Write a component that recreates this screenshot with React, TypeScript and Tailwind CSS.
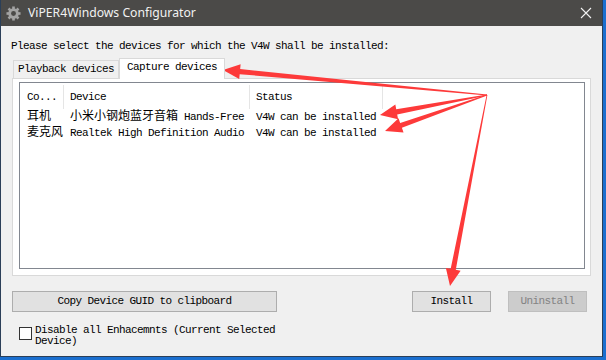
import React from "react"

const MONO = { fontFamily: "'Liberation Mono', 'Noto Sans CJK SC', monospace" }

const APEX: [number, number] = [487, 95]
const TIPS: [number, number][] = [
  [223, 70],
  [380, 115],
  [385, 131],
  [450, 286],
]

function arrowPoints(a: [number, number], t: [number, number]) {
  const dx = t[0] - a[0]
  const dy = t[1] - a[1]
  const len = Math.hypot(dx, dy)
  const ux = dx / len
  const uy = dy / len
  const nx = -uy
  const ny = ux
  const head = 17
  const bx = t[0] - ux * head
  const by = t[1] - uy * head
  const pts: [number, number][] = [
    [a[0] + nx * 0.4, a[1] + ny * 0.4],
    [bx + nx * 2.6, by + ny * 2.6],
    [bx + nx * 7.5, by + ny * 7.5],
    [t[0], t[1]],
    [bx - nx * 7.5, by - ny * 7.5],
    [bx - nx * 2.6, by - ny * 2.6],
    [a[0] - nx * 0.4, a[1] - ny * 0.4],
  ]
  return pts.map((p) => p.join(",")).join(" ")
}

function Gear() {
  const teeth = Array.from({ length: 8 }, (_, i) => i * 45)
  return (
    <svg width="15" height="15" viewBox="0 0 16 16">
      <g fill="#a3a3a3">
        {teeth.map((deg) => (
          <rect key={deg} x="6.6" y="0.5" width="2.8" height="4" transform={`rotate(${deg} 8 8)`} />
        ))}
        <circle cx="8" cy="8" r="5.6" />
      </g>
      <circle cx="8" cy="8" r="2.6" fill="#4b4a48" />
    </svg>
  )
}

const ROWS = [
  { name: "耳机", device: "小米小钢炮蓝牙音箱", deviceEn: " Hands-Free", status: "V4W can be installed" },
  { name: "麦克风", device: "", deviceEn: "Realtek High Definition Audio", status: "V4W can be installed" },
]

function Cjk({ children }: { children: React.ReactNode }) {
  return <span className="text-[12px] tracking-[0px]">{children}</span>
}

export default function App() {
  return (
    <div className="relative w-[606px] h-[360px] bg-[#1b6fcf] overflow-hidden">
      <div className="w-[603px] h-[357px] bg-[#f0f0f0] border-l border-r border-b border-[#2b3f58] flex flex-col">
        {/* title bar */}
        <div className="h-[26px] shrink-0 bg-[#4b4a48] flex items-center pl-[5px] pr-[8px]">
          <Gear />
          <span className="ml-[7px] text-[12.2px] text-[#f2f2f2]" style={{ fontFamily: "'Noto Sans', sans-serif" }}>
            ViPER4Windows Configurator
          </span>
          <svg className="ml-auto mr-[2px]" width="12" height="12" viewBox="0 0 12 12">
            <path d="M1 1 L11 11 M11 1 L1 11" stroke="#f2f2f2" strokeWidth="1.1" />
          </svg>
        </div>

        <div className="flex flex-col text-[11px] tracking-[-0.6px] text-black" style={MONO}>
          <p className="mt-[14px] ml-[10px] leading-[12px]">Please select the devices for which the V4W shall be installed:</p>

          {/* tabs */}
          <div className="mt-[6px] ml-[11px] w-[579px] flex flex-col">
            <div className="flex items-end h-[20px]">
              <div className="ml-[1px] h-[18px] w-[106px] border border-b-0 border-[#d9d9d9] bg-[#f0f0f0] flex items-center justify-center leading-none">
                Playback devices
              </div>
              <div className="relative z-10 mb-[-1px] h-[21px] w-[106px] border border-b-0 border-[#d9d9d9] bg-white flex items-start pt-[3px] justify-center leading-none">
                Capture devices
              </div>
            </div>
            <div className="h-[198px] border border-[#d9d9d9] bg-white pt-[3px] pl-[6px] pr-[5px] pb-[6px] flex">
              <div className="flex-1 border border-[#828790] bg-white flex flex-col">
                <div className="h-[26px] pt-[2px] flex leading-none">
                  <div className="w-[44px] pl-[7px] flex items-center border-r border-[#e5e5e5]">Co...</div>
                  <div className="w-[186px] pl-[6px] flex items-center border-r border-[#e5e5e5]">Device</div>
                  <div className="w-[133px] pl-[6px] flex items-center border-r border-[#e5e5e5]">Status</div>
                </div>
                {ROWS.map((r) => (
                  <div key={r.name} className="h-[16px] flex items-center leading-none whitespace-pre">
                    <div className="w-[44px] pl-[7px]">
                      <Cjk>{r.name}</Cjk>
                    </div>
                    <div className="w-[186px] pl-[6px]">
                      {r.device && <Cjk>{r.device}</Cjk>}
                      {r.deviceEn}
                    </div>
                    <div className="w-[133px] pl-[6px]">{r.status}</div>
                  </div>
                ))}
              </div>
            </div>
          </div>

          {/* buttons */}
          <div className="mt-[15px] ml-[11px] flex h-[21px]">
            <div className="w-[265px] border border-[#adadad] bg-[#e1e1e1] flex items-center justify-center leading-none">
              Copy Device GUID to clipboard
            </div>
            <div className="ml-[135px] w-[79px] border border-[#adadad] bg-[#e1e1e1] flex items-center justify-center leading-none">
              Install
            </div>
            <div className="ml-[17px] w-[79px] border border-[#bfbfbf] bg-[#cccccc] text-[#838383] flex items-center justify-center leading-none">
              Uninstall
            </div>
          </div>

          {/* checkbox */}
          <div className="mt-[13px] ml-[18px] flex items-start">
            <div className="mt-[2px] w-[13px] h-[13px] border border-[#333] bg-white shrink-0" />
            <span className="ml-[3px] leading-[11px]">
              Disable all Enhacemnts (Current Selected
              <br />
              Device)
            </span>
          </div>
        </div>
      </div>

      {/* annotation arrows */}
      <svg className="absolute inset-0 pointer-events-none" width="606" height="360">
        {TIPS.map((t) => (
          <polygon key={t.join("-")} points={arrowPoints(APEX, t)} fill="#fd3a3a" />
        ))}
      </svg>
    </div>
  )
}
